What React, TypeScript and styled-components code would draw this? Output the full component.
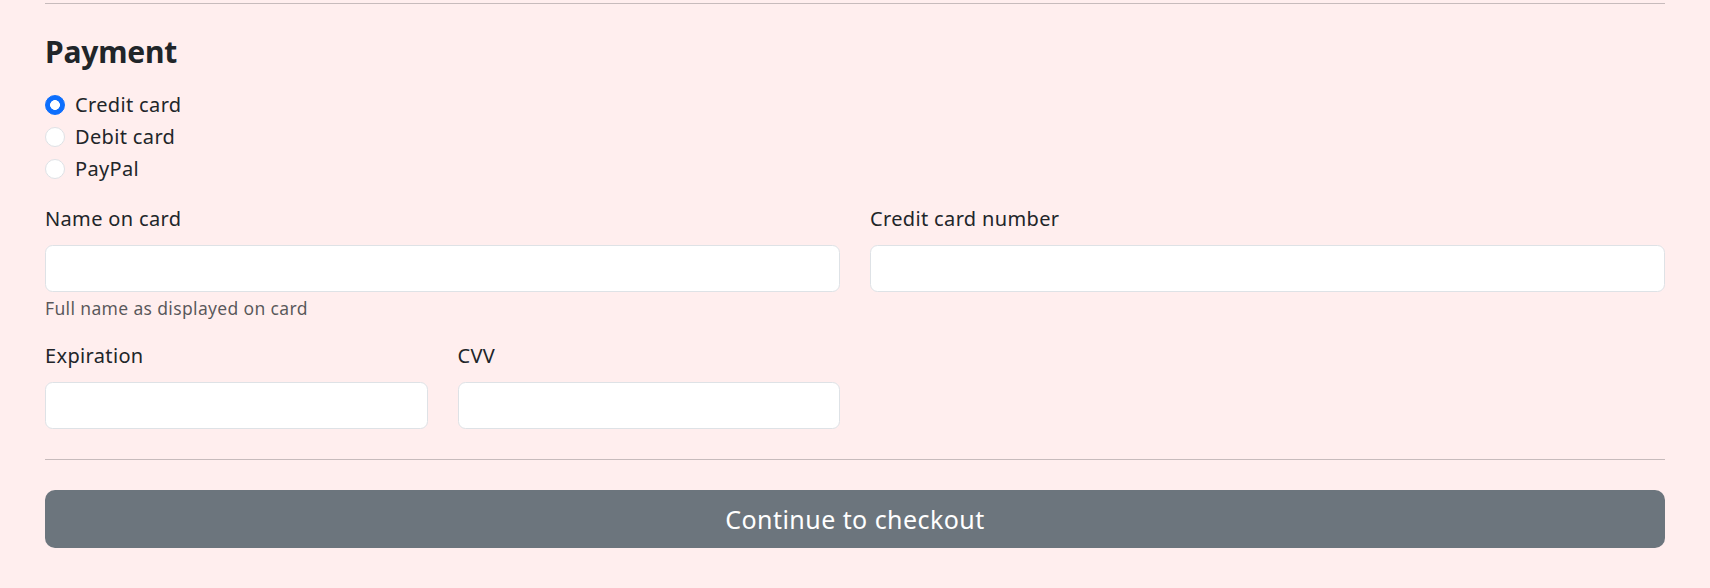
import styled, { createGlobalStyle } from 'styled-components'

const GlobalStyle = createGlobalStyle`
  * { box-sizing: border-box; }
  html, body {
    margin: 0;
    padding: 0;
    background: #ffeeee;
    color: #212529;
    font-family: "Noto Sans", "Open Sans", sans-serif;
    font-size: 20px;
    line-height: 1.5;
    letter-spacing: 0.35px;
  }
`

const methods = [
  { id: 'credit', label: 'Credit card', checked: true },
  { id: 'debit', label: 'Debit card', checked: false },
  { id: 'paypal', label: 'PayPal', checked: false },
]

export default function App() {
  return (
    <>
      <GlobalStyle />
      <Page>
        <Divider $top={3} $bottom={30} />
        <Heading>Payment</Heading>

        <Methods>
          {methods.map(m => (
            <Check key={m.id}>
              <Radio type="radio" name="paymentMethod" id={m.id} defaultChecked={m.checked} />
              <CheckLabel htmlFor={m.id}>{m.label}</CheckLabel>
            </Check>
          ))}
        </Methods>

        <FieldGrid>
          <Field $span={6}>
            <Label htmlFor="cc-name">Name on card</Label>
            <Input id="cc-name" type="text" />
            <Hint>Full name as displayed on card</Hint>
          </Field>
          <Field $span={6}>
            <Label htmlFor="cc-number">Credit card number</Label>
            <Input id="cc-number" type="text" />
          </Field>
          <Field $span={3}>
            <Label htmlFor="cc-expiration">Expiration</Label>
            <Input id="cc-expiration" type="text" />
          </Field>
          <Field $span={3}>
            <Label htmlFor="cc-cvv">CVV</Label>
            <Input id="cc-cvv" type="text" />
          </Field>
        </FieldGrid>

        <Divider $top={30} $bottom={30} />

        <SubmitButton type="submit">Continue to checkout</SubmitButton>
      </Page>
    </>
  )
}

const Page = styled.main`
  padding: 0 45px 40px;
`

const Divider = styled.hr<{ $top: number; $bottom: number }>`
  margin: ${({ $top }) => $top}px 0 ${({ $bottom }) => $bottom}px;
  border: 0;
  border-top: 1px solid rgba(33, 37, 41, 0.25);
`

const Heading = styled.h4`
  margin: 0 0 10px;
  font-size: 30px;
  font-weight: 700;
  line-height: 1.2;
  letter-spacing: -0.2px;
`

const Methods = styled.div`
  margin: 20px 0;
`

const Check = styled.div`
  display: flex;
  align-items: flex-start;
  min-height: 30px;
  margin-bottom: 2px;
`

const Radio = styled.input`
  appearance: none;
  flex-shrink: 0;
  width: 20px;
  height: 20px;
  margin: 5px 10px 0 0;
  border: 1px solid #dee2e6;
  border-radius: 50%;
  background: #fff;

  &:checked {
    border-color: #0d6efd;
    background: radial-gradient(circle, #fff 0 4.6px, #0d6efd 5.2px);
  }
`

const CheckLabel = styled.label`
  line-height: 30px;
`

const FieldGrid = styled.div`
  display: grid;
  grid-template-columns: repeat(12, 1fr);
  column-gap: 30px;
  row-gap: 20px;
`

const Field = styled.div<{ $span: number }>`
  grid-column: span ${({ $span }) => $span};
`

const Label = styled.label`
  display: block;
  margin-bottom: 11px;
  line-height: 30px;
`

const Input = styled.input`
  display: block;
  width: 100%;
  height: 47px;
  padding: 7px 15px;
  font: inherit;
  color: #212529;
  background: #fff;
  border: 1px solid #dee2e6;
  border-radius: 7.5px;
`

const Hint = styled.div`
  margin-top: 3px;
  font-size: 17.5px;
  color: rgba(33, 37, 41, 0.75);
`

const SubmitButton = styled.button`
  display: block;
  width: 100%;
  height: 58px;
  padding: 0 20px;
  border: 0;
  border-radius: 10px;
  background: #6c757d;
  color: #fff;
  font-family: inherit;
  font-size: 25px;
  line-height: 1.5;
  letter-spacing: 0.45px;
`
